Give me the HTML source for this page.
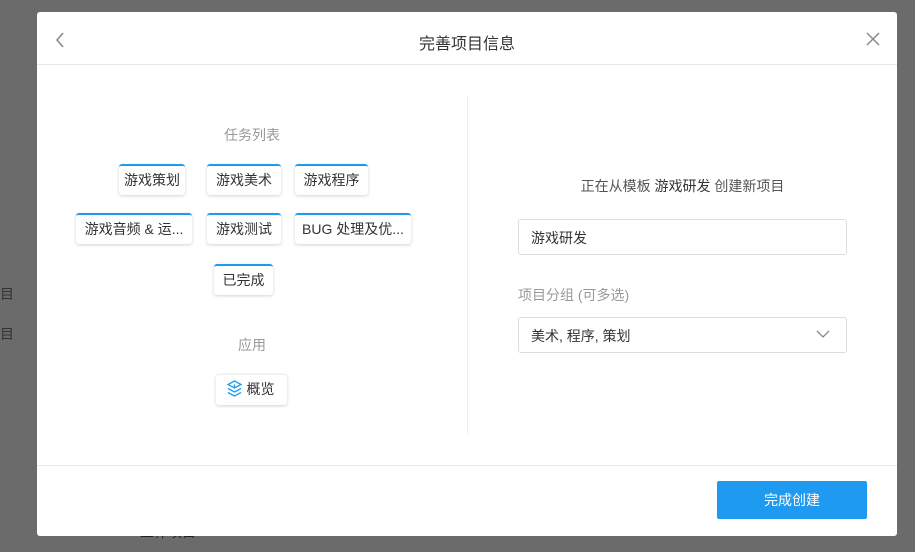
<!DOCTYPE html>
<html><head><meta charset="utf-8"><style>
*{margin:0;padding:0;box-sizing:border-box}
body{width:915px;height:552px;overflow:hidden;background:#6b6b6b;font-family:"Liberation Sans","Noto Sans CJK SC",sans-serif;position:relative}
.a{position:absolute}
.modal{left:37px;top:12px;width:860px;height:524px;background:#fff;border-radius:3px}
.tag{position:absolute;height:31px;background:#fff;border-top:2px solid #1e9bf0;border-radius:3px;box-shadow:0 1px 3px rgba(0,0,0,.18);font-size:14px;color:#333;text-align:center;line-height:29px;white-space:nowrap}
.lbl{font-size:14px;color:#999;text-align:center}
</style></head><body>
<div class="a" style="left:0;top:284px;font-size:14px;color:#333">目</div>
<div class="a" style="left:0;top:324px;font-size:14px;color:#333">目</div>
<div class="a" style="left:140px;top:522px;font-size:14px;color:#222">工作项目</div>
<div class="a modal">
  <svg class="a" style="left:17px;top:20px" width="12" height="16" viewBox="0 0 12 16"><path d="M9 1L3 8l6 7" stroke="#888" stroke-width="1.5" fill="none"/></svg>
  <div class="a" style="left:0;width:860px;top:18px;text-align:center;font-size:16px;color:#333">完善项目信息</div>
  <svg class="a" style="left:829px;top:20px" width="14" height="14" viewBox="0 0 14 14"><path d="M1 1l12 12M13 1L1 13" stroke="#888" stroke-width="1.5"/></svg>
  <div class="a" style="left:0;top:52px;width:860px;height:1px;background:#e8e8e8"></div>
  <div class="a" style="left:430px;top:84px;width:1px;height:339px;background:#eee"></div>
  <div class="a" style="left:0;top:453px;width:860px;height:1px;background:#e8e8e8"></div>
  <div class="a lbl" style="left:165px;width:100px;top:113px">任务列表</div>
  <div class="tag" style="left:82px;top:152px;width:66px">游戏策划</div>
  <div class="tag" style="left:170px;top:152px;width:74px">游戏美术</div>
  <div class="tag" style="left:258px;top:152px;width:73px">游戏程序</div>
  <div class="tag" style="left:39px;top:201px;width:116px">游戏音频 &amp; 运...</div>
  <div class="tag" style="left:170px;top:201px;width:74px">游戏测试</div>
  <div class="tag" style="left:258px;top:201px;width:116px">BUG 处理及优...</div>
  <div class="tag" style="left:177px;top:252px;width:59px">已完成</div>
  <div class="a lbl" style="left:165px;width:100px;top:323px">应用</div>
  <div class="tag" style="left:179px;top:362px;width:71px;border-top:1px solid #eee;line-height:29px;padding-left:18px">概览</div>
  <svg class="a" style="left:189px;top:368px" width="17" height="18" viewBox="0 0 17 18"><path d="M8.5 1L2 4.5l6.5 3.5L15 4.5zM2 8.5l6.5 3.5 6.5-3.5M2 12.5l6.5 3.5 6.5-3.5M8.5 4.5v3.5" stroke="#1e9bf0" stroke-width="1.3" fill="none"/></svg>
  <div class="a" style="left:431px;width:429px;top:164px;text-align:center;font-size:14px;color:#555">正在从模板 <span style="color:#333">游戏研发</span> 创建新项目</div>
  <div class="a" style="left:481px;top:207px;width:329px;height:36px;border:1px solid #ddd;border-radius:3px;font-size:14px;color:#333;line-height:36px;padding-left:12px">游戏研发</div>
  <div class="a" style="left:481px;top:273px;font-size:14px;color:#999">项目分组 (可多选)</div>
  <div class="a" style="left:481px;top:305px;width:329px;height:36px;border:1px solid #ddd;border-radius:3px;font-size:14px;color:#333;line-height:36px;padding-left:12px">美术, 程序, 策划</div>
  <svg class="a" style="left:779px;top:318px" width="14" height="9" viewBox="0 0 14 9"><path d="M1 1l6 6 6-6" stroke="#888" stroke-width="1.3" fill="none"/></svg>
  <div class="a" style="left:680px;top:469px;width:150px;height:38px;background:#1e9bf0;border-radius:2px;color:#fff;font-size:14px;text-align:center;line-height:38px">完成创建</div>
</div>
</body></html>
